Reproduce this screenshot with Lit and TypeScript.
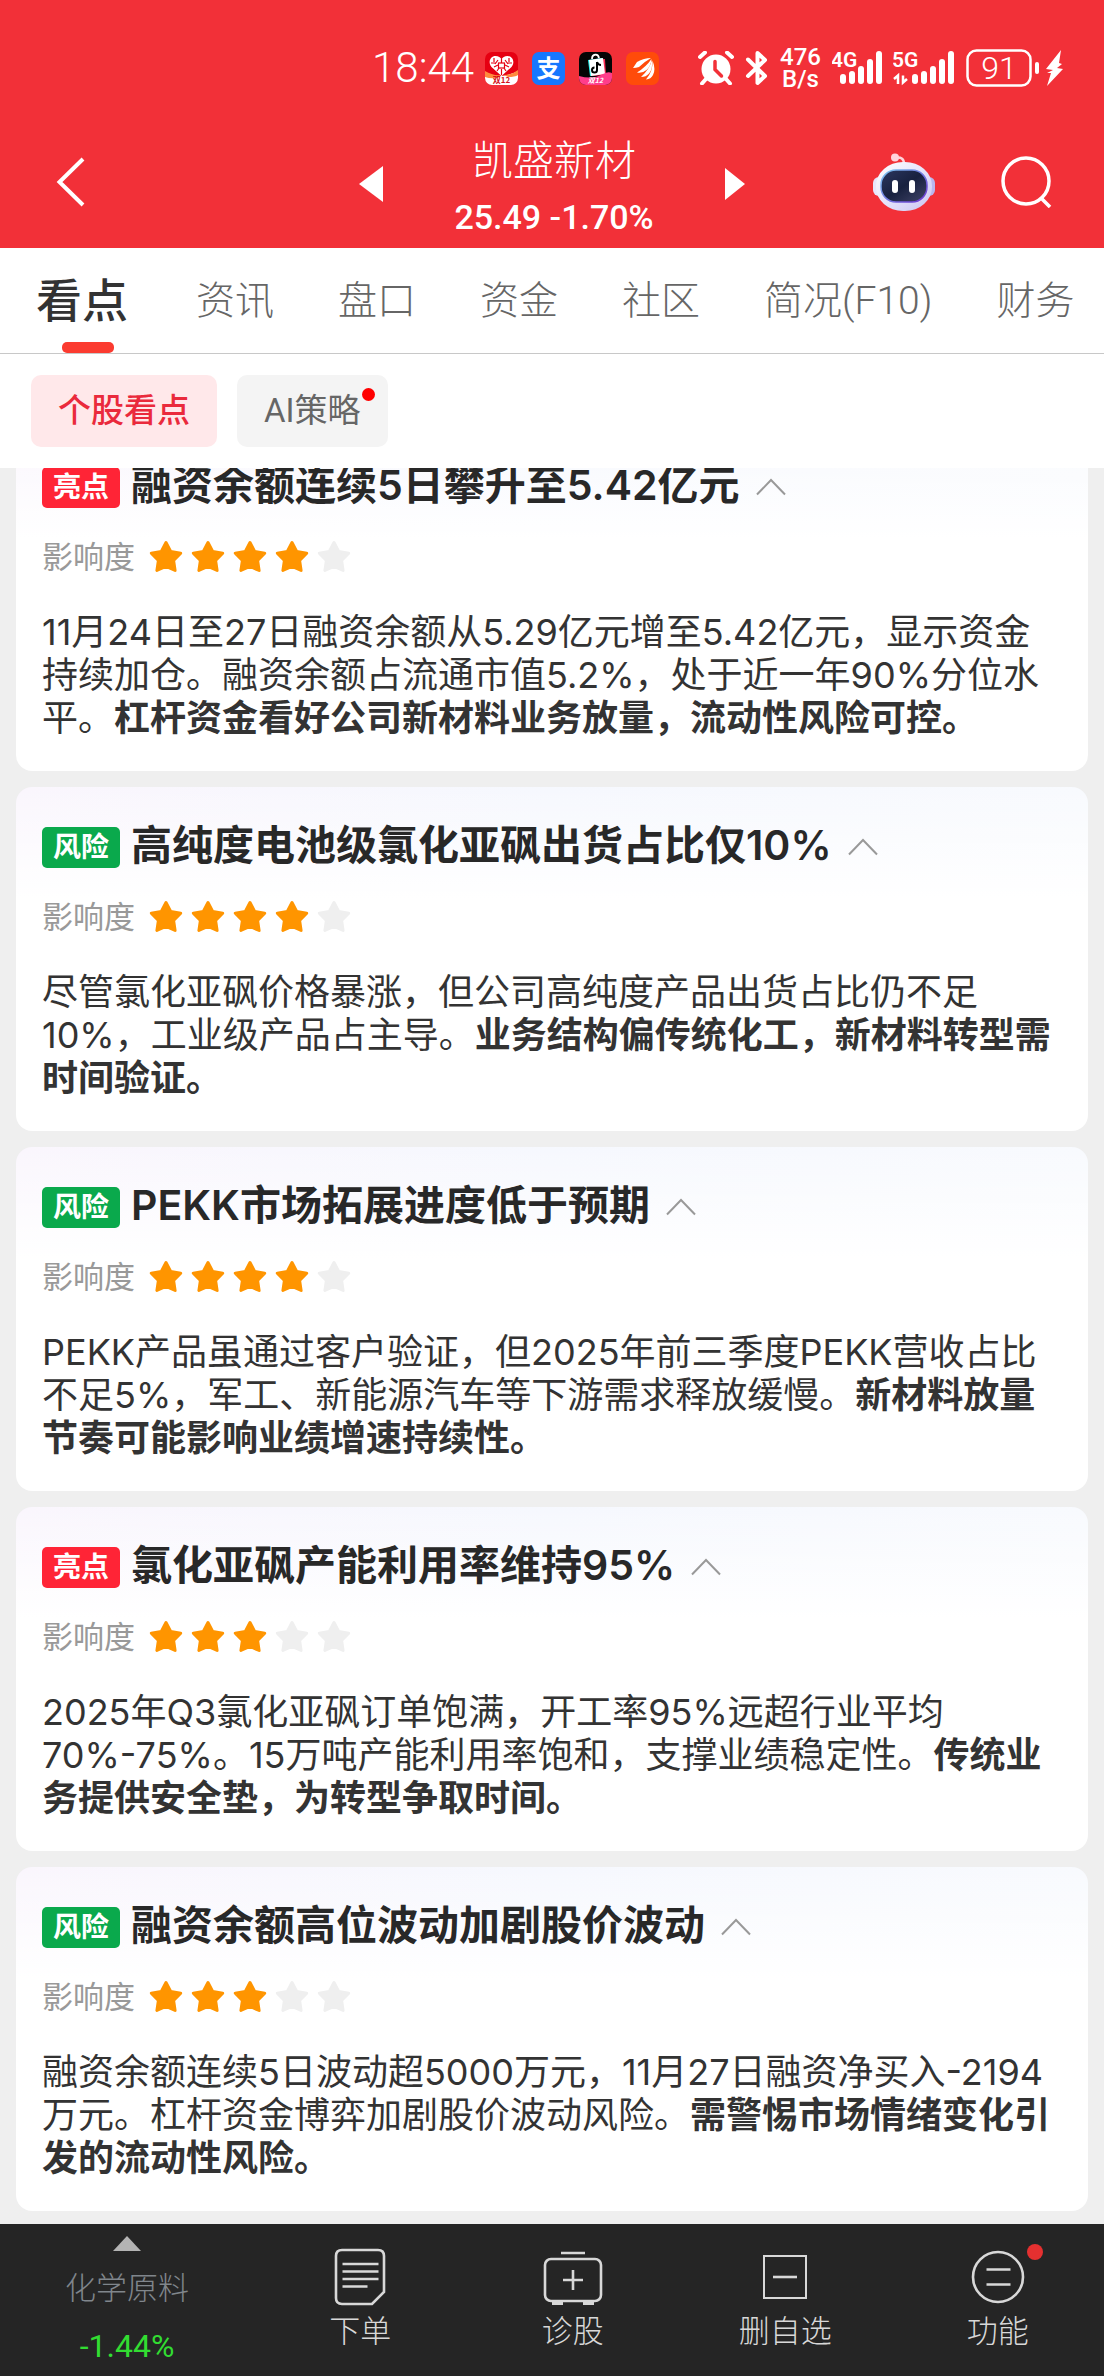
import { LitElement, html, css, svg, nothing } from "lit";
import { customElement, property, state } from "lit/decorators.js";
import { classMap } from "lit/directives/class-map.js";

interface Insight {
  kind: "good" | "risk";
  title: string;
  stars: number;
  text: string;
  conclusion: string;
}

const INSIGHTS: Insight[] = [
  {
    kind: "good",
    title: "融资余额连续5日攀升至5.42亿元",
    stars: 4,
    text: "11月24日至27日融资余额从5.29亿元增至5.42亿元，显示资金持续加仓。融资余额占流通市值5.2%，处于近一年90%分位水平。",
    conclusion: "杠杆资金看好公司新材料业务放量，流动性风险可控。",
  },
  {
    kind: "risk",
    title: "高纯度电池级氯化亚砜出货占比仅10%",
    stars: 4,
    text: "尽管氯化亚砜价格暴涨，但公司高纯度产品出货占比仍不足10%，工业级产品占主导。",
    conclusion: "业务结构偏传统化工，新材料转型需时间验证。",
  },
  {
    kind: "risk",
    title: "PEKK市场拓展进度低于预期",
    stars: 4,
    text: "PEKK产品虽通过客户验证，但2025年前三季度PEKK营收占比不足5%，军工、新能源汽车等下游需求释放缓慢。",
    conclusion: "新材料放量节奏可能影响业绩增速持续性。",
  },
  {
    kind: "good",
    title: "氯化亚砜产能利用率维持95%",
    stars: 3,
    text: "2025年Q3氯化亚砜订单饱满，开工率95%远超行业平均70%-75%。15万吨产能利用率饱和，支撑业绩稳定性。",
    conclusion: "传统业务提供安全垫，为转型争取时间。",
  },
  {
    kind: "risk",
    title: "融资余额高位波动加剧股价波动",
    stars: 3,
    text: "融资余额连续5日波动超5000万元，11月27日融资净买入-2194万元。杠杆资金博弈加剧股价波动风险。",
    conclusion: "需警惕市场情绪变化引发的流动性风险。",
  },
];

const TABS = ["看点", "资讯", "盘口", "资金", "社区", "简况(F10)", "财务"];

const reset = css`
  * {
    box-sizing: border-box;
  }
  button {
    margin: 0;
    padding: 0;
    border: 0;
    background: none;
    color: inherit;
    font: inherit;
    cursor: pointer;
  }
  h1,
  h2,
  p {
    margin: 0;
    font: inherit;
  }
  svg {
    display: block;
    flex: none;
  }
`;

@customElement("status-bar")
export class StatusBar extends LitElement {
  static styles = [
    reset,
    css`
      :host {
        display: block;
      }
      .bar {
        display: flex;
        align-items: center;
        justify-content: flex-end;
        gap: 11px;
        height: 136px;
        padding-right: 41px;
      }
      .time {
        font-size: 42px;
        font-weight: 300;
        line-height: 52px;
      }
      .apps {
        display: flex;
        gap: 14px;
        margin-right: 28px;
      }
      .speed {
        font-size: 24px;
        font-weight: 500;
        line-height: 22px;
        text-align: center;
      }
      .power {
        display: flex;
        align-items: center;
        gap: 6px;
      }
      .label {
        font-family: Roboto, sans-serif;
        font-weight: 600;
        font-size: 21px;
      }
      .charge {
        font-family: Roboto, sans-serif;
        font-size: 32px;
        font-weight: 300;
      }
      .glyph {
        font-family: "Noto Sans CJK SC", sans-serif;
        font-weight: 700;
      }
    `,
  ];

  private bars(x: number) {
    const tops = [24, 21, 16, 9, 1];
    return tops.map(
      (y, i) => svg`<rect x=${x + i * 9} y=${y} width="6" height=${34 - y} rx="3" fill="#fff" />`
    );
  }

  render() {
    return html`
      <div class="bar">
        <span class="time">18:44</span>
        <div class="apps">
          <svg width="33" height="33" viewBox="0 0 33 33" aria-hidden="true">
            <defs><clipPath id="c1"><rect width="33" height="33" rx="7" /></clipPath></defs>
            <g clip-path="url(#c1)">
              <rect width="33" height="33" fill="#e60012" />
              <path d="M16.500 24L6.500 15C2.500 10 5.500 4 10.500 4c3 0 5 1.500 6 3.500C17.500 5.500 19.500 4 22.500 4c5 0 8 6 4 11z" fill="#fff" />
              <g stroke="#e60012" stroke-width="1.200" fill="none">
                <path d="M16.500 7v4M9 6v4M24 6v4M6 11h5M22 11h5M13 8l-3 4M20 8l3 4M9 15l4-2M24 15l-4-2M12 19l2-3M21 19l-2-3M16.500 17v6" />
                <rect x="13.500" y="11" width="6" height="5" />
              </g>
              <path d="M0 20q8 5 16.500 4T33 19v14H0z" fill="#fff" />
              <path d="M0 19q8 5 16 4l-3 3Q5 27 0 25zM33 18q-6 5-14 5l4 2q7 0 10-2z" fill="#ff8a3c" />
              <text class="glyph" x="16.500" y="31" font-size="8" text-anchor="middle" fill="#d4111b">双12</text>
            </g>
          </svg>
          <svg width="33" height="33" viewBox="0 0 33 33" aria-hidden="true">
            <rect width="33" height="33" rx="7" fill="#1677ff" />
            <text class="glyph" x="16.500" y="25" font-size="24" text-anchor="middle" fill="#fff">支</text>
          </svg>
          <svg width="33" height="33" viewBox="0 0 33 33" aria-hidden="true">
            <defs><clipPath id="c3"><rect width="33" height="33" rx="7" /></clipPath></defs>
            <g clip-path="url(#c3)">
              <rect width="33" height="33" fill="#050505" />
              <path d="M9 8l14-2 3 16-15 2z" fill="#25f4ee" />
              <path d="M12 8l14-1 1 16-14 1z" fill="#fe2c55" />
              <path d="M10 8l14-2 2 16-14 2z" fill="#fff" />
              <path d="M13 7c0-5 6-6 7-1" fill="none" stroke="#fff" stroke-width="1.800" />
              <path d="M18 10v8a2.500 2.500 0 1 1-2.500-2.500M18 10q1 3 4 3" fill="none" stroke="#000" stroke-width="2" />
              <path d="M0 24q14 4 24-2 5-3 9-1v12H0z" fill="#ff3d8b" />
              <text class="glyph" x="16.500" y="31" font-size="7" font-style="italic" text-anchor="middle" fill="#fff">双12</text>
            </g>
          </svg>
          <svg width="33" height="33" viewBox="0 0 33 33" aria-hidden="true">
            <rect width="33" height="33" rx="7" fill="#ff4b0a" />
            <path d="M7 16l4-6q7-4 14-4-7 4-12 9-3 1-6 1z" fill="#fff" />
            <path d="M11 20.500Q20 15 25.500 7q-.500 7-5 11-4 3.500-9.500 2.500z" fill="#fff" />
            <path d="M15 25q8-7 11-17 1 9-3 13.500-3 3.500-8 3.500z" fill="#fff" />
            <path d="M20 27.500q7-8 6.500-19 3.500 9 .500 14.500-2 4-7 4.500z" fill="#fff" />
          </svg>
        </div>
        <svg width="36" height="34" viewBox="0 0 36 34" aria-hidden="true">
          <circle cx="18" cy="18" r="14.500" fill="#fff" />
          <path d="M2 6l5-4.500M34 6l-5-4.500M8 28l-4 4.500M28 28l4 4.500" stroke="#fff" stroke-width="4" stroke-linecap="round" />
          <path d="M17 10.500v8l6.500 6.500" fill="none" stroke="#f23038" stroke-width="3.500" stroke-linecap="round" />
        </svg>
        <svg width="24" height="36" viewBox="0 0 24 36" aria-hidden="true">
          <path d="M3 9.500l17 16.500-7.500 7V3L20 10 3 26" fill="none" stroke="#fff" stroke-width="4" stroke-linecap="round" stroke-linejoin="round" />
        </svg>
        <div class="speed">476<br />B/s</div>
        <svg width="50" height="36" viewBox="0 0 50 36" aria-hidden="true">
          <text class="label" x="-1" y="17" fill="#fff">4G</text>
          ${this.bars(8)}
        </svg>
        <svg width="62" height="36" viewBox="0 0 62 36" aria-hidden="true">
          <text class="label" x="-1" y="17" fill="#fff">5G</text>
          <path d="M1 29l4-3.500v8.500M14 29l-4 3.500V25.500" fill="none" stroke="#fff" stroke-width="2.500" />
          ${this.bars(19)}
        </svg>
        <div class="power">
          <svg width="74" height="38" viewBox="0 0 74 38" role="img" aria-label="91">
            <rect x="1.500" y="1.500" width="63" height="35" rx="9" fill="none" stroke="#fff" stroke-width="2.500" />
            <path d="M71 15v8" stroke="#fff" stroke-width="4" stroke-linecap="round" />
            <text class="charge" x="33" y="30" text-anchor="middle" fill="#fff">91</text>
          </svg>
          <svg width="17" height="38" viewBox="0 0 17 38" aria-hidden="true">
            <path d="M15 1L0 20l7 1-6 3 4 0-4 13L17 20l-6-1 5-4-3-1z" fill="#fff" />
          </svg>
        </div>
      </div>
    `;
  }
}

@customElement("insight-card")
export class InsightCard extends LitElement {
  @property({ attribute: false }) item!: Insight;
  @state() private open = true;

  static styles = [
    reset,
    css`
      :host {
        display: block;
        font-family: Inter, "Noto Sans CJK SC", sans-serif;
      }
      .card {
        padding: 34px 26px 31px;
        border-radius: 16px;
        background: linear-gradient(to bottom, rgba(255, 255, 255, 0), #fff 112px),
          linear-gradient(to right, #faf6fd, #f6f8fe 50%, #f8fafe);
      }
      .head {
        display: flex;
        align-items: flex-end;
        height: 47px;
      }
      .badge {
        flex: none;
        width: 78px;
        height: 41px;
        border-radius: 5px;
        color: #fff;
        font-size: 28px;
        font-weight: 700;
        line-height: 40px;
        text-align: center;
      }
      .good {
        background: #ff2436;
      }
      .risk {
        background: #0aa94c;
      }
      .title {
        margin-left: 11px;
        color: #282828;
        font-size: 41px;
        font-weight: 600;
        line-height: 46px;
        white-space: nowrap;
      }
      .toggle {
        display: flex;
        align-items: center;
        height: 42px;
        padding: 0 16px;
      }
      .toggle.closed svg {
        transform: rotate(180deg);
      }
      .impact {
        display: flex;
        align-items: center;
        height: 40px;
        margin-top: 29px;
        color: #999;
        font-size: 31px;
        line-height: 40px;
      }
      .stars {
        display: flex;
        gap: 8px;
        margin-left: 14px;
      }
      .body {
        margin-top: 34px;
        color: #333;
        font-size: 36px;
        line-height: 43px;
      }
      .strong {
        font-weight: 700;
      }
    `,
  ];

  private star(on: boolean) {
    const color = on ? "#ff9500" : "#efefef";
    return html`<svg width="34" height="34" viewBox="0 0 34 34">
      <path
        d="M17 2.500l4.700 9 10 1.700-7.100 7.300 1.500 10-9.100-4-9.100 4 1.500-10-7.100-7.300 10-1.700z"
        fill=${color}
        stroke=${color}
        stroke-width="3"
        stroke-linejoin="round"
      />
    </svg>`;
  }

  render() {
    const { kind, title, stars, text, conclusion } = this.item;
    return html`
      <article class="card">
        <div class="head">
          <span class="badge ${kind}">${kind === "good" ? "亮点" : "风险"}</span>
          <h2 class="title">${title}</h2>
          <button
            class=${classMap({ toggle: true, closed: !this.open })}
            aria-label=${title}
            aria-expanded=${this.open}
            @click=${() => (this.open = !this.open)}
          >
            <svg width="30" height="18" viewBox="0 0 30 18">
              <path d="M1 16.500L15 2l14 14.500" fill="none" stroke="#999" stroke-width="2" />
            </svg>
          </button>
        </div>
        <div class="impact">
          <span>影响度</span>
          <span class="stars">${[1, 2, 3, 4, 5].map((n) => this.star(n <= stars))}</span>
        </div>
        ${this.open
          ? html`<p class="body">${text}<b class="strong">${conclusion}</b></p>`
          : nothing}
      </article>
    `;
  }
}

@customElement("app-root")
export class AppRoot extends LitElement {
  @state() private tab = 0;
  @state() private view = 0;

  static styles = [
    reset,
    css`
      :host {
        display: flex;
        flex-direction: column;
        min-height: 100vh;
        background: #efefef;
        font-family: Roboto, "Noto Sans CJK SC", sans-serif;
      }
      .top {
        background: #f23038;
        color: #fff;
      }
      .nav {
        display: grid;
        grid-template-columns: 1fr auto 1fr;
        height: 112px;
        padding: 0 52px;
      }
      .side {
        display: flex;
        align-items: center;
        height: 92px;
      }
      .end {
        justify-content: flex-end;
        gap: 66px;
      }
      .stock {
        display: flex;
        align-items: flex-start;
      }
      .step {
        display: flex;
        align-items: center;
        height: 96px;
      }
      .names {
        min-width: 342px;
        text-align: center;
      }
      .name {
        font-size: 41px;
        font-weight: 300;
        line-height: 50px;
      }
      .price {
        margin-top: 11px;
        font-size: 34px;
        font-weight: 500;
        line-height: 40px;
      }
      .tabs {
        display: flex;
        gap: 64px;
        height: 106px;
        padding: 0 32px 0 36px;
        overflow: hidden;
        border-bottom: 1px solid #c8c8c8;
        background: #fff;
      }
      .tab {
        position: relative;
        flex: none;
        color: #666;
        font-size: 39px;
        font-weight: 300;
        line-height: 104px;
      }
      .tab.on {
        padding-right: 4px;
        color: #333;
        font-size: 46px;
        font-weight: 500;
      }
      .tab.on::after {
        content: "";
        position: absolute;
        bottom: 0;
        left: 26px;
        width: 52px;
        height: 11px;
        border-radius: 5px;
        background: #fb3b30;
      }
      .chips {
        display: flex;
        gap: 20px;
        height: 114px;
        padding: 21px 31px;
        background: #fff;
      }
      .chip {
        position: relative;
        height: 72px;
        padding: 0 27px;
        border-radius: 10px;
        background: #f4f4f4;
        color: #666;
        font-size: 33px;
        line-height: 68px;
      }
      .chip.on {
        background: #ffe8ea;
        color: #ea2a3c;
        font-weight: 500;
      }
      .dot {
        position: absolute;
        top: 13px;
        right: 13px;
        width: 13px;
        height: 13px;
        border-radius: 50%;
        background: #f00;
      }
      .feed {
        flex: 1;
        overflow: hidden;
      }
      .list {
        display: flex;
        flex-direction: column;
        gap: 16px;
        margin-top: -41px;
        padding: 0 16px 13px;
      }
      .dock {
        display: grid;
        grid-template-columns: 254px repeat(4, 1fr);
        height: 152px;
        background: #252525;
        color: #d8d8d8;
        font-size: 31px;
        font-weight: 300;
      }
      .sector {
        display: flex;
        flex-direction: column;
        align-items: center;
        padding-top: 12px;
      }
      .sector-name {
        margin-top: 18px;
        color: #80868c;
        line-height: 40px;
      }
      .sector-change {
        margin-top: 18px;
        color: #32dc32;
        font-size: 32px;
        font-weight: 400;
        line-height: 38px;
      }
      .action {
        display: flex;
        flex-direction: column;
        align-items: center;
        padding-top: 24px;
      }
      .action-label {
        margin-top: 6px;
        line-height: 40px;
      }
      .icon {
        position: relative;
      }
      .alert {
        position: absolute;
        top: -4px;
        right: -15px;
        width: 16px;
        height: 16px;
        border-radius: 50%;
        background: #e53030;
      }
    `,
  ];

  private actionIcon(name: string) {
    const shapes: Record<string, unknown> = {
      order: svg`
        <path d="M12 2h36q6 0 6 6v36L42 56H12q-6 0-6-6V8q0-6 6-6z" />
        <path d="M12.500 16h36M12.500 23.500h36M12.500 31h36M12.500 38.500h25" />`,
      diagnose: svg`
        <rect x="2" y="11" width="56" height="42" rx="6" />
        <path d="M18 5h24M30 22v20M20 32h20" />
        <path d="M9 55h11M40 55h11" stroke-width="4" />`,
      remove: svg`
        <rect x="9" y="8" width="42" height="42" stroke-width="2" />
        <path d="M18 29h24" />`,
      more: svg`
        <circle cx="30" cy="29" r="25" />
        <path d="M18.500 21.500h24M18.500 36.500h24" />`,
    };
    return html`<svg width="60" height="58" viewBox="0 0 60 58" fill="none" stroke="#d8d8d8" stroke-width="2.600">
      ${shapes[name]}
    </svg>`;
  }

  private action(name: string, label: string, alert = false) {
    return html`<button class="action">
      <span class="icon">${this.actionIcon(name)}${alert ? html`<i class="alert"></i>` : nothing}</span>
      <span class="action-label">${label}</span>
    </button>`;
  }

  render() {
    return html`
      <header class="top">
        <status-bar></status-bar>
        <div class="nav">
          <div class="side">
            <button aria-label="返回">
              <svg width="36" height="52" viewBox="0 0 36 52">
                <path d="M31 3L7.500 26 31 49" fill="none" stroke="#fff" stroke-width="4" />
              </svg>
            </button>
          </div>
          <div class="stock">
            <button class="step" aria-label="上一只">
              <svg width="24" height="36" viewBox="0 0 24 36"><path d="M24 0v36L0 18z" fill="#fff" /></svg>
            </button>
            <div class="names">
              <h1 class="name">凯盛新材</h1>
              <p class="price">25.49 -1.70%</p>
            </div>
            <button class="step" aria-label="下一只">
              <svg width="20" height="32" viewBox="0 0 20 32"><path d="M0 0v32l20-16z" fill="#fff" /></svg>
            </button>
          </div>
          <div class="side end">
            <button aria-label="智能助手">
              <svg width="62" height="60" viewBox="0 0 62 60">
                <defs>
                  <linearGradient id="shell" x1="0" y1="0" x2="1" y2="1">
                    <stop offset="0" stop-color="#fff" />
                    <stop offset="0.500" stop-color="#e6e4fb" />
                    <stop offset="1" stop-color="#c9c4f2" />
                  </linearGradient>
                  <linearGradient id="visor" x1="0" y1="0" x2="1" y2="1">
                    <stop offset="0" stop-color="#2c3760" />
                    <stop offset="0.500" stop-color="#18213f" />
                    <stop offset="1" stop-color="#414468" />
                  </linearGradient>
                  <linearGradient id="rim" x1="0" y1="0" x2="1" y2="1">
                    <stop offset="0" stop-color="#7cc8f0" />
                    <stop offset="1" stop-color="#6a2fd0" />
                  </linearGradient>
                </defs>
                <path d="M22 6q9-2 9 6" fill="none" stroke="#ffd3dc" stroke-width="2.500" />
                <circle cx="22" cy="5.500" r="4" fill="#ffd3dc" />
                <rect x="0" y="25" width="12" height="19" rx="6" fill="#e8e6fc" />
                <rect x="50" y="25" width="12" height="19" rx="6" fill="#b9b5ee" />
                <rect x="3" y="10" width="56" height="49" rx="27" ry="24" fill="url(#shell)" />
                <rect x="8" y="18" width="46" height="32" rx="15" fill="url(#visor)" stroke="url(#rim)" stroke-width="1.500" />
                <rect x="19" y="28" width="6" height="13" rx="3" fill="#fff" />
                <rect x="36" y="28" width="6" height="13" rx="3" fill="#fff" />
              </svg>
            </button>
            <button aria-label="搜索">
              <svg width="51" height="52" viewBox="0 0 51 52">
                <circle cx="25" cy="25" r="23" fill="none" stroke="#fff" stroke-width="3.500" />
                <path d="M40 42l9 9" stroke="#fff" stroke-width="3.500" />
              </svg>
            </button>
          </div>
        </div>
      </header>

      <nav class="tabs">
        ${TABS.map(
          (t, i) => html`<button
            class=${classMap({ tab: true, on: i === this.tab })}
            @click=${() => (this.tab = i)}
          >${t}</button>`
        )}
      </nav>

      <div class="chips">
        <button class=${classMap({ chip: true, on: this.view === 0 })} @click=${() => (this.view = 0)}>个股看点</button>
        <button class=${classMap({ chip: true, on: this.view === 1 })} @click=${() => (this.view = 1)}>
          AI策略<i class="dot"></i>
        </button>
      </div>

      <main class="feed">
        <div class="list">
          ${INSIGHTS.map((item) => html`<insight-card .item=${item}></insight-card>`)}
        </div>
      </main>

      <footer class="dock">
        <button class="sector">
          <svg width="28" height="15" viewBox="0 0 28 15"><path d="M14 0l14 15H0z" fill="#b4b4b4" /></svg>
          <span class="sector-name">化学原料</span>
          <span class="sector-change">-1.44%</span>
        </button>
        ${this.action("order", "下单")} ${this.action("diagnose", "诊股")}
        ${this.action("remove", "删自选")} ${this.action("more", "功能", true)}
      </footer>
    `;
  }
}
